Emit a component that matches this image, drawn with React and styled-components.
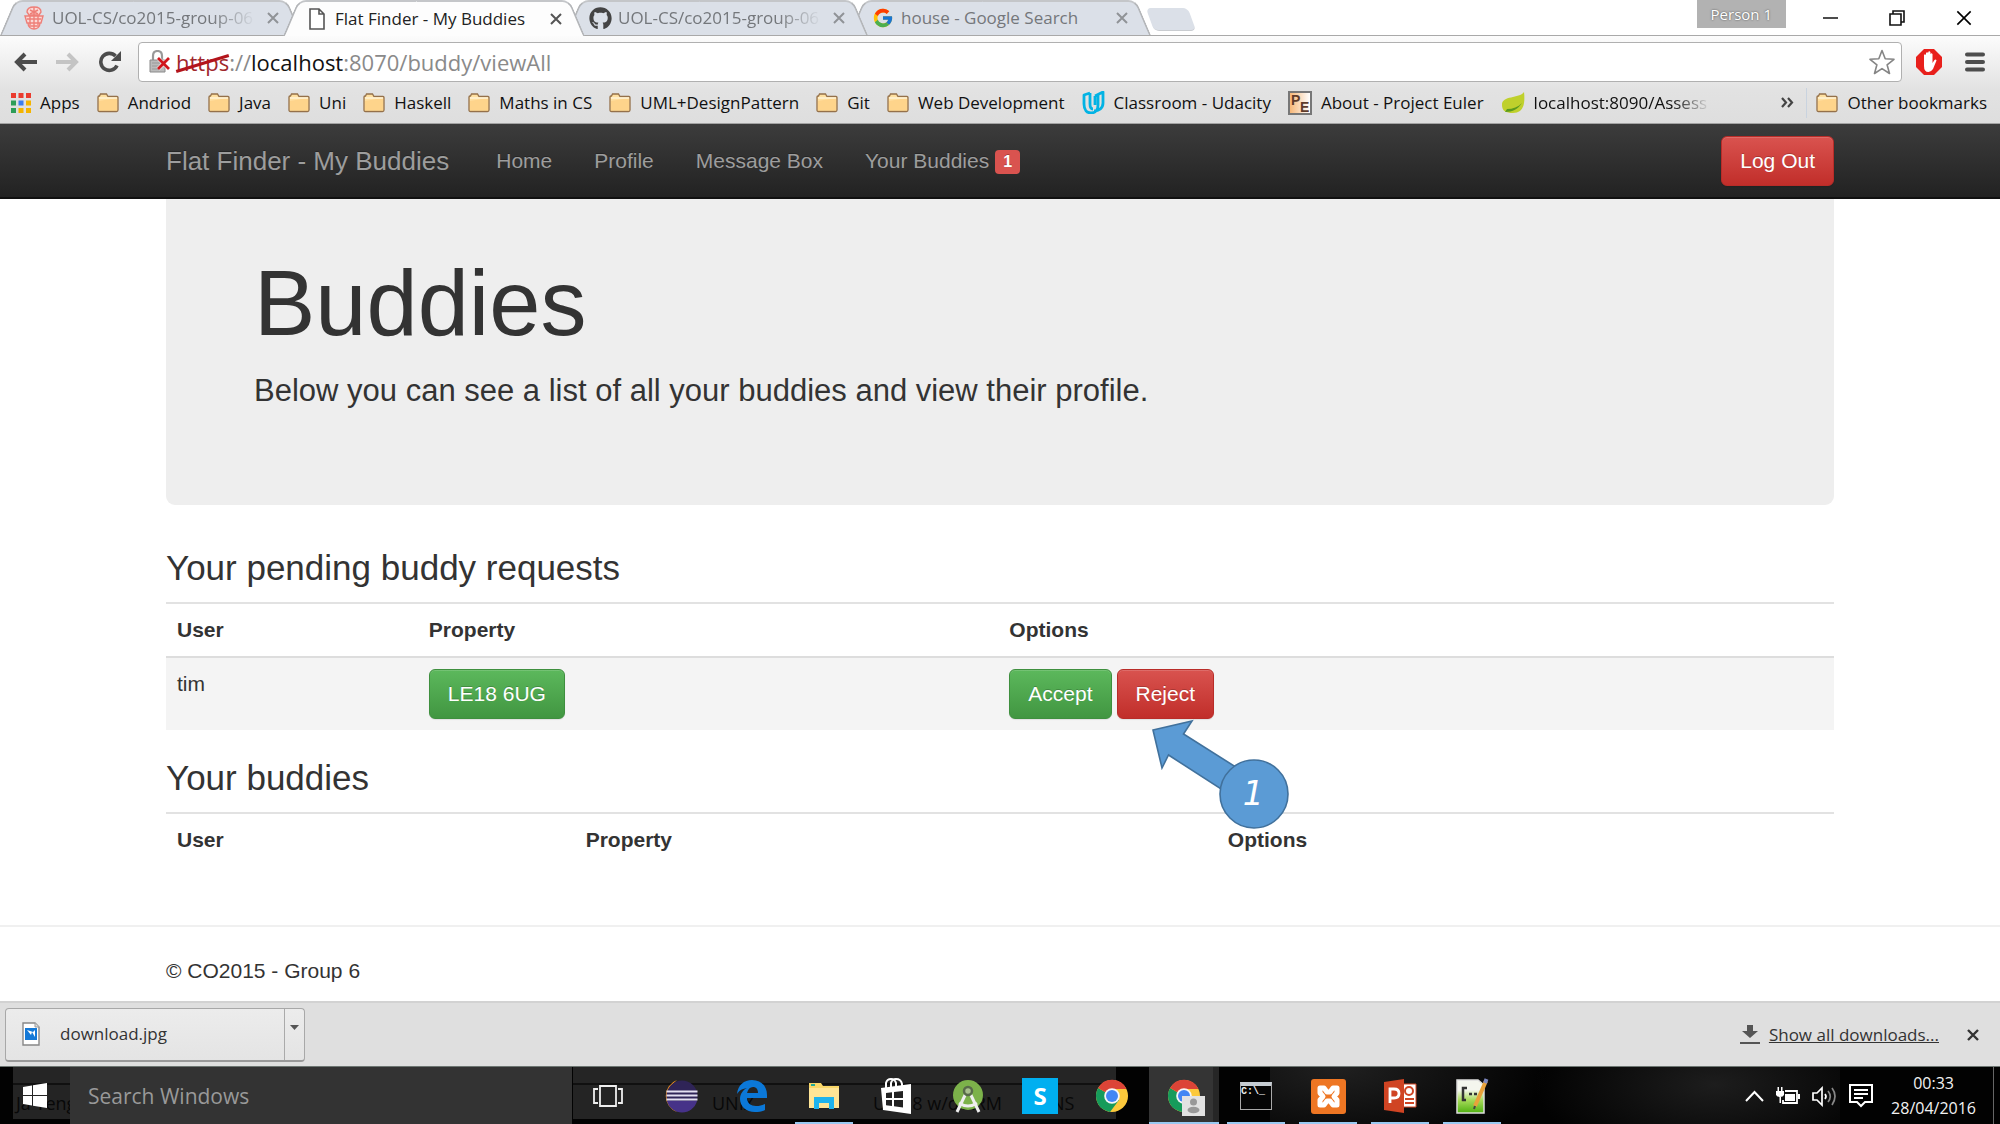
import React from "react";
import styled, { createGlobalStyle, css } from "styled-components";
import { FaGithub } from "react-icons/fa";
import { FcGoogle } from "react-icons/fc";

const uiFont = '"Open Sans", "Noto Sans", sans-serif';
const pageFont = '"Liberation Sans", Arial, sans-serif';

const GlobalStyle = createGlobalStyle`
  *, *::before, *::after { box-sizing: border-box; }
  body { margin: 0; background: #fff; overflow: hidden; }
  button, input { font: inherit; color: inherit; }
  button { border: 0; padding: 0; background: none; cursor: pointer; }
  a { color: inherit; text-decoration: none; }
  svg { display: block; flex: none; }
`;

const Screen = styled.div`
  display: flex;
  flex-direction: column;
  min-height: 100vh;
  background: #fff;
`;

/* ---------- browser frame ---------- */

const TabStrip = styled.div`
  display: flex;
  align-items: flex-start;
  height: 36px;
  border-bottom: 1px solid #a9a9a9;
  font: 17px/22px ${uiFont};
`;

const tabSide = css`
  content: "";
  position: absolute;
  z-index: -1;
  top: 0;
  bottom: 0;
  width: 51%;
  border-top: 2px solid #c4c6c9;
  background: ${(p) => (p.$active ? "#fdfdfd" : "#dbe0e8")};
`;

const Tab = styled.div`
  position: relative;
  z-index: ${(p) => p.$layer};
  isolation: isolate;
  display: flex;
  align-items: center;
  width: 301px;
  height: ${(p) => (p.$active ? 36 : 35)}px;
  margin-right: -18px;
  padding: 4px 17px 3px 22px;
  color: ${(p) => (p.$active ? "#222" : "#74777b")};
  &::before {
    ${tabSide}
    left: 0;
    border-left: 2px solid #b4b6b9;
    border-top-left-radius: 8px;
    transform: skewX(-23deg);
    transform-origin: bottom;
  }
  &::after {
    ${tabSide}
    right: 0;
    border-right: 2px solid #b4b6b9;
    border-top-right-radius: 8px;
    transform: skewX(23deg);
    transform-origin: bottom;
  }
`;

const TabIcon = styled.span`
  display: flex;
  justify-content: center;
  width: 24px;
  margin-right: 6px;
`;

const TabTitle = styled.a`
  flex: 1;
  overflow: hidden;
  white-space: nowrap;
  ${(p) => p.$fade && "mask-image: linear-gradient(90deg, #000 78%, transparent 100%);"}
`;

const TabClose = styled.button`
  display: flex;
  justify-content: center;
  width: 22px;
  margin-left: 6px;
  color: ${(p) => (p.$active ? "#555" : "#909397")};
`;

const NewTab = styled.button`
  width: 42px;
  height: 23px;
  margin: 8px 0 0 18px;
  border-radius: 5px;
  border-bottom: 1px solid #c9ccd0;
  background: #dbe0e8;
  transform: skewX(20deg);
`;

const WindowControls = styled.div`
  display: flex;
  align-items: flex-start;
  margin-left: auto;
  padding-right: 28px;
  gap: 51px;
  svg { margin-top: 10px; }
`;

const Profile = styled.button`
  height: 28px;
  padding: 0 14px;
  margin-right: -14px;
  background: #b2b2b2;
  color: #fff;
  font-size: 15px;
  text-shadow: 0 0 2px #444;
`;

const Toolbars = styled.div`
  background: linear-gradient(#fcfcfc, #e2e2e2 62%, #dedede);
  border-bottom: 1px solid #a3a3a3;
  font-family: ${uiFont};
`;

const AddressRow = styled.div`
  display: flex;
  align-items: center;
  padding: 6px 15px 0 14px;
`;

const ToolButton = styled.button`
  display: flex;
  width: 24px;
  margin-right: 18px;
  color: ${(p) => (p.$dim ? "#c4c4c4" : "#4c4c4c")};
`;

const Omnibox = styled.div`
  flex: 1;
  display: flex;
  align-items: center;
  height: 40px;
  margin-left: -2px;
  padding: 0 6px 0 10px;
  border: 1px solid #b0b0b0;
  border-radius: 4px;
  background: #fff;
  color: #8a8a8a;
  font-size: 22px;
`;

const Scheme = styled.span`
  position: relative;
  color: #a0282c;
  &::after {
    content: "";
    position: absolute;
    left: -1px;
    right: -1px;
    top: 15px;
    height: 3px;
    background: #b3141b;
    transform: rotate(-17deg);
  }
`;

const UrlLabel = styled.label`
  margin-left: 5px;
  white-space: nowrap;
  b { color: #111; font-weight: 400; }
`;

const UrlInput = styled.input`
  flex: 1;
  min-width: 0;
  padding: 0;
  border: 0;
  outline: 0;
  background: none;
`;

const EndTools = styled.div`
  display: flex;
  align-items: center;
  gap: 23px;
  padding-left: 14px;
  color: #4c4c4c;
`;

const BookmarkRow = styled.nav`
  display: flex;
  align-items: center;
  height: 41px;
  padding: 0 13px 0 11px;
  gap: 17px;
  color: #111;
  font-size: 17px;
  line-height: 24px;
`;

const Bookmark = styled.a`
  display: flex;
  align-items: center;
  gap: 9px;
  white-space: nowrap;
  span { ${(p) => p.$fade && "mask-image: linear-gradient(90deg, #000 80%, transparent 102%);"} }
`;

const BookmarkEnd = styled.div`
  display: flex;
  align-items: center;
  gap: 12px;
  margin: 0 -8px 0 auto;
  color: #444;
`;

const Divider = styled.span`
  width: 1px;
  height: 30px;
  background: #c9d3df;
`;

/* ---------- web page ---------- */

const Page = styled.div`
  flex: 1;
  color: #333;
  font: 21px/30px ${pageFont};
`;

const Navbar = styled.header`
  border-bottom: 2px solid #101010;
  background: linear-gradient(#3c3c3c, #222);
`;

const Container = styled.div`
  max-width: 1668px;
  margin: 0 auto;
`;

const NavInner = styled(Container)`
  display: flex;
  align-items: center;
  height: 73px;
  color: #9d9d9d;
  text-shadow: 0 -1px 0 rgba(0, 0, 0, 0.25);
`;

const Brand = styled.a`
  margin-right: 26px;
  font-size: 26px;
`;

const NavLink = styled.a`
  display: flex;
  align-items: center;
  padding: 0 21px;
`;

const Badge = styled.span`
  margin: 3px 0 0 6px;
  padding: 0 8px;
  border-radius: 4px;
  background: #d9534f;
  color: #fff;
  font: bold 16px/24px ${pageFont};
`;

const tones = {
  success: ["#5cb85c", "#419641", "#3e8f3e"],
  danger: ["#d9534f", "#c12e2a", "#b92c28"],
};

const Button = styled.button`
  padding: 9px 18px;
  border: 1px solid ${(p) => tones[p.$tone][2]};
  border-radius: 6px;
  background: linear-gradient(${(p) => tones[p.$tone][0]}, ${(p) => tones[p.$tone][1]});
  box-shadow: inset 0 1px 0 rgba(255, 255, 255, 0.15), 0 1px 1px rgba(0, 0, 0, 0.08);
  color: #fff;
  line-height: 30px;
  white-space: nowrap;
  text-shadow: 0 -1px 0 rgba(0, 0, 0, 0.2);
`;

const LogOut = styled(Button)`
  margin-left: auto;
`;

const Jumbotron = styled.section`
  padding: 54px 88px 93px;
  border-radius: 0 0 9px 9px;
  background: #eee;
  h1 { margin: 0; font-size: 92px; line-height: 101px; font-weight: 400; }
  p { margin: 15px 0 0; font-size: 31px; line-height: 43px; }
`;

const Heading = styled.h3`
  margin: ${(p) => p.$space}px 0 15px;
  font-size: 35px;
  line-height: 38px;
  font-weight: 400;
`;

const Table = styled.table`
  width: 100%;
  table-layout: fixed;
  border-collapse: separate;
  border-spacing: 0;
  border-top: 2px solid #e2e2e2;
  th, td { padding: 11px; text-align: left; vertical-align: top; }
  tbody td { position: relative; border-top: 2px solid #ddd; background: #f4f4f4; }
`;

const Actions = styled.div`
  display: flex;
  gap: 5px;
`;

const Callout = styled.div`
  position: absolute;
  z-index: 2;
  left: 152px;
  top: 60px;
  width: 140px;
  height: 112px;
`;

const CalloutNumber = styled.span`
  position: absolute;
  left: 69px;
  top: 42px;
  width: 68px;
  color: #fff;
  font: italic 33px/68px "DejaVu Sans", sans-serif;
  text-align: center;
`;

const Footer = styled.footer`
  margin-top: 59px;
  padding: 29px 0 15px;
  border-top: 2px solid #f0f0f0;
`;

/* ---------- download shelf ---------- */

const Shelf = styled.div`
  display: flex;
  align-items: center;
  height: 65px;
  padding: 0 21px 0 5px;
  border-top: 2px solid #d2d2d2;
  background: #dfdfdf;
  color: #333;
  font: 17px/24px ${uiFont};
`;

const DownloadItem = styled.div`
  display: flex;
  width: 300px;
  height: 54px;
  border: 1px solid #a8a8a8;
  border-bottom: 2px solid #999;
  border-radius: 4px;
  background: linear-gradient(#ececec, #e4e4e4);
`;

const DownloadFile = styled.button`
  flex: 1;
  display: flex;
  align-items: center;
  gap: 20px;
  padding-left: 16px;
  text-align: left;
`;

const DownloadMenu = styled.button`
  display: flex;
  justify-content: center;
  width: 20px;
  padding-bottom: 14px;
  align-items: center;
  border-left: 1px solid #aaa;
`;

const ShowAll = styled.a`
  display: flex;
  align-items: center;
  gap: 9px;
  margin: 0 28px 0 auto;
  span { text-decoration: underline; }
`;

/* ---------- taskbar ---------- */

const Taskbar = styled.footer`
  position: relative;
  isolation: isolate;
  display: flex;
  height: 59px;
  border-top: 1px solid #6d7672;
  background: #020202;
  color: #f2f2f2;
  font: 16px/25px ${uiFont};
`;

const Reflection = styled.div`
  position: absolute;
  z-index: -1;
  top: 0;
  left: ${(p) => p.$left}px;
  width: ${(p) => p.$width}px;
  height: 52px;
  background: linear-gradient(#252525 16px, #101010 16px, #101010 18px, #242424 18px);
`;

const Sheen = styled.div`
  position: absolute;
  z-index: -1;
  inset: 0 160px 0 1270px;
  background:
    radial-gradient(ellipse 210px 90px at 68px 0, #202020, transparent),
    radial-gradient(ellipse 180px 80px at 78% 30%, #1d1d1d, transparent);
`;

const Ghost = styled.span`
  position: absolute;
  left: ${(p) => p.$x}px;
  top: 24px;
  color: #080808;
  font-size: 18px;
  white-space: pre;
`;

const Start = styled.button`
  width: 70px;
  padding-left: 23px;
`;

const Search = styled.input`
  width: 502px;
  padding: 0 18px;
  border: 0;
  outline: 0;
  background: #333;
  font-size: 21px;
  &::placeholder { color: #999; opacity: 1; }
`;

const Task = styled.button`
  display: flex;
  align-items: center;
  justify-content: center;
  width: 72px;
  ${(p) => p.$running && css`
    background: linear-gradient(#99c9f1, #99c9f1) center bottom / 58px 3px no-repeat;
  `}
  ${(p) => p.$current && css`
    background: linear-gradient(#99c9f1, #99c9f1) center bottom / 70px 3px no-repeat,
      linear-gradient(90deg, #343434 64px, #262626 64px) center / 70px 100% no-repeat;
  `}
`;

const Tray = styled.div`
  display: flex;
  align-items: center;
  gap: 12px;
  margin-left: auto;
  padding-right: 6px;
`;

const Clock = styled.time`
  margin: 0 5px 0 6px;
  text-align: center;
`;

const PeekEdge = styled.span`
  width: 1px;
  height: 100%;
  background: #666;
`;

/* ---------- icons ---------- */

const Cross = ({ size = 12, w = 2 }) => (
  <svg width={size} height={size} viewBox="0 0 12 12" stroke="currentColor" strokeWidth={w}>
    <path d="M1 1L11 11M11 1L1 11" />
  </svg>
);

const Crest = () => (
  <svg width="20" height="24" viewBox="0 0 20 24" fill="none" stroke="#ee7f78" strokeWidth="1.400">
    <path d="M3 6C3 2 7 1 10 1s7 1 7 5l-2 3H5zM1 10h18l-2 7H3zM4 17c0 4 3 6 6 6s6-2 6-6" fill="#fbd9d6" />
    <path d="M10 1v22M6 4l8 4M14 4L6 8M3 13h14M6 10v9M14 10v9M5 20h10" />
  </svg>
);

const Doc = () => (
  <svg width="16" height="22" viewBox="0 0 16 22" fill="#fff" stroke="#555" strokeWidth="1.600">
    <path d="M1 1h9l5 5v15H1zM10 1v5h5" />
  </svg>
);

const Folder = () => (
  <svg width="22" height="20" viewBox="0 0 22 20">
    <path d="M1 17V4q0-1 1-1h.5L3.500 1h6l1.500 2.500H20q1 0 1 1V17q0 1.500-1.500 1.500h-17Q1 18.500 1 17z" fill="#ffe0a0" stroke="#94704a" strokeWidth="1.300" />
    <path d="M2 8L20 5v12.500H2z" fill="#fdcb7d" opacity=".6" />
    <path d="M2 5h18" stroke="#fff3d6" strokeWidth="1.500" />
  </svg>
);

const Apps = () => (
  <svg width="20" height="20" viewBox="0 0 20 20">
    {["#ea3b2e", "#ea3b2e", "#ea3b2e", "#2d9d58", "#3b7ded", "#f4b400", "#2d9d58", "#f4b400", "#f4b400"].map((c, i) => (
      <rect key={i} x={(i % 3) * 7.5} y={Math.floor(i / 3) * 7.5} width="5" height="5" fill={c} />
    ))}
  </svg>
);

const Udacity = () => (
  <svg width="23" height="23" viewBox="0 0 23 23" fill="none" stroke="#02b3e4" strokeWidth="2.800" strokeLinejoin="round">
    <path d="M8 2L2 4v9c0 6 3 9 7 9 5 0 7-4 7-8V4M8 2v11c0 3 1 5 3 5M13 5l8-4v11c0 5-4 8-9 8M13 5v9" />
  </svg>
);

const EulerBox = styled.b`
  position: relative;
  width: 24px;
  height: 24px;
  border: 2px solid #777;
  background: linear-gradient(90deg, #f7b778, #fff);
  color: #5f3b2a;
  font: bold 14px/14px ${pageFont};
  i { position: absolute; left: 1px; top: 0; font-style: normal; }
  i + i { left: 10px; top: 7px; }
`;

const Euler = () => <EulerBox><i>P</i><i>E</i></EulerBox>;

const Leaf = () => (
  <svg width="24" height="23" viewBox="0 0 24 23">
    <path d="M23 1c1 9 1 21-11 21C5 22 1 20 1 14 1 4 18 8 23 1z" fill="#bfd02c" />
    <path d="M4 21c8 0 13-3 17-9-4 4-9 6-15 6z" fill="#5b9a1e" />
  </svg>
);

const Arrow = ({ flip }) => (
  <svg width="23" height="20" viewBox="0 0 23 20" fill="none" stroke="currentColor" strokeWidth="4">
    <path d={flip ? "M0 10h20M12 2l8 8-8 8" : "M23 10H3M11 2L3 10l8 8"} />
  </svg>
);

const Reload = () => (
  <svg width="24" height="22" viewBox="0 0 24 22">
    <path d="M19 14.500A8.500 8.500 0 1 1 17.500 5" fill="none" stroke="currentColor" strokeWidth="3.600" />
    <path d="M23 0v10H13z" fill="currentColor" />
  </svg>
);

const BrokenLock = () => (
  <svg width="22" height="24" viewBox="0 0 22 24">
    <path d="M4 11V6q0-5 4.500-5T13 6v5" fill="none" stroke="#999" strokeWidth="2.200" />
    <path d="M1 10h15v12H1z" fill="#bbb" stroke="#8a8a8a" />
    <path d="M3 13h8M3 16h8M3 19h8" stroke="#999" />
    <path d="M9 8l11 11M20 8L9 19" stroke="#fff" strokeWidth="4" opacity=".7" />
    <path d="M9 8l11 11M20 8L9 19" stroke="#d0161c" strokeWidth="2.800" />
  </svg>
);

const Star = () => (
  <svg width="26" height="26" viewBox="0 0 26 26" fill="#fff" stroke="#858585" strokeWidth="1.600" strokeLinejoin="round">
    <path d="M13 1.500l3.200 8.300 8.800.5-6.900 5.500 2.400 8.700L13 19.600l-7.500 4.900 2.400-8.700L1 10.300l8.800-.5z" />
  </svg>
);

const Stop = () => (
  <svg width="26" height="26" viewBox="0 0 26 26">
    <path d="M8 0h10l8 8v10l-8 8H8l-8-8V8z" fill="#e8201c" />
    <path d="M8 13V6q1-1.600 2 0v5-7q1-1.600 2.200 0v7-8q1.100-1.500 2.200 0v8-6q1-1.500 2.100 0v9l2-3q1.500-1 2 .5L17 20q-2 3-4.500 3Q8 23 8 17z" fill="#fff" />
  </svg>
);

const Menu = () => (
  <svg width="20" height="20" viewBox="0 0 20 20" stroke="#4d4d4d" strokeWidth="4" strokeLinecap="round">
    <path d="M2 2.500h16M2 10h16M2 17.500h16" />
  </svg>
);

const Picture = () => (
  <svg width="18" height="24" viewBox="0 0 18 24">
    <path d="M1 1h12l4 4v18H1z" fill="#fff" stroke="#888" strokeWidth="1.400" />
    <path d="M3 6h12v12H3z" fill="#1479d7" />
    <path d="M5 8l4 5 1-3 3 5V8l-2 2z" fill="#fff" />
    <path d="M13 1v4h4" fill="#ddd" stroke="#999" />
  </svg>
);

const Windows = () => (
  <svg width="24" height="26" viewBox="0 0 24 26" fill="#fff">
    <path d="M0 4l9-1.500V12H0zM10 2.300L24 0v12H10zM0 13h9v9.500L0 21zM10 13h14v12l-14-2.300z" />
  </svg>
);

const TaskView = () => (
  <svg width="30" height="22" viewBox="0 0 30 22" fill="none" stroke="#eee" strokeWidth="1.800">
    <path d="M7 1h16v20H7zM5 4H1v14h4M25 4h4v14h-4" />
  </svg>
);

const Eclipse = () => (
  <svg width="36" height="34" viewBox="0 0 36 34">
    <path d="M15 1A17 17 0 0 0 15 33 20 20 0 0 1 15 1z" fill="#f7941e" />
    <circle cx="20" cy="17" r="15.500" fill="#2f2457" />
    <path d="M5 22h30a15.500 15.500 0 0 1-30 0z" fill="#463288" />
    <path d="M4.500 12.500h31M4.500 16.500h31M4.500 20.500h31" stroke="#e4e0f2" strokeWidth="2" />
  </svg>
);

const Edge = () => (
  <svg width="30" height="32" viewBox="0 0 30 32">
    <path d="M0 14C1 5 7 0 15 0c10 0 15 7 15 15v3H10c0 5 4 8 9 8 4 0 7-1 9-2v6c-3 1.500-6 2-10 2C9 32 3 26 3 19c0-5 3-9 7-11-6 1-8 3-10 6zm10-1h11c0-4-2-6-5-6-3 0-5 2-6 6z" fill="#0b78d8" fillRule="evenodd" />
  </svg>
);

const Explorer = () => (
  <svg width="32" height="28" viewBox="0 0 32 28">
    <path d="M1 1h12l2 3h16v22H1z" fill="#f9d768" />
    <path d="M1 6h30v20H1z" fill="#ffe596" />
    <path d="M3 2h4v2H3z" fill="#2a9" />
    <path d="M6 27V15h20v12h-5v-6H11v6z" fill="#1fb3ec" />
  </svg>
);

const Store = () => (
  <svg width="32" height="36" viewBox="0 0 32 36">
    <path d="M6 10V5q1-4 5-4t5 4v5M11 9V5q1-4 5-4 5 0 6 5v3" fill="none" stroke="#fff" strokeWidth="2" />
    <path d="M1 10L31 6v30L3 32z" fill="#fff" />
    <path d="M6 15l6-.7V20H6zM14 14l9-1v7h-9zM6 22h6v6l-6-.7zM14 22h9v7.500l-9-1.200z" fill="#222" />
  </svg>
);

const Studio = () => (
  <svg width="32" height="34" viewBox="0 0 32 34">
    <circle cx="16" cy="16" r="15" fill="#7cb24a" />
    <path d="M16 10L5 33M16 10l11 23M7 24q9 6 18 0" fill="none" stroke="#eee" strokeWidth="3" />
    <circle cx="16" cy="12" r="4" fill="#a9c08d" stroke="#586b4a" strokeWidth="2.500" />
  </svg>
);

const SkypeTile = styled.span`
  width: 36px;
  height: 36px;
  background: #00aff0;
  color: #fff;
  font: bold 24px/36px ${uiFont};
`;

const ChromeMark = ({ person }) => (
  <svg width="34" height="38" viewBox="0 0 34 38" overflow="visible">
    <circle cx="17" cy="19" r="16" fill="#fcc93c" />
    <path d="M17 19L3.100 11A16 16 0 0 0 15 34.900L24 23z" fill="#169b5b" />
    <path d="M17 19L3.100 11A16 16 0 0 1 31.500 12H17z" fill="#dc4437" />
    <circle cx="17" cy="19" r="7.800" fill="#f6f6f6" />
    <circle cx="17" cy="19" r="6" fill="#4286f4" />
    {person && (
      <g>
        <path d="M15 19h23v20H15z" fill="#e2e2e2" />
        <circle cx="26.500" cy="25" r="3.500" fill="#999" />
        <ellipse cx="26.500" cy="33" rx="6" ry="3.200" fill="#999" />
      </g>
    )}
  </svg>
);

const PromptBox = styled.span`
  width: 32px;
  height: 28px;
  border: 1px solid #a9a9a9;
  border-top: 4px solid #c6ccd2;
  background: #050505;
  color: #eee;
  font: bold 10px/12px "Liberation Mono", monospace;
  text-align: left;
`;

const Xampp = () => (
  <svg width="35" height="35" viewBox="0 0 35 35">
    <rect width="35" height="35" rx="3" fill="#ee7623" />
    <path d="M9 9h4l3 4h3l3-4h4v5l-3 3.500 3 3.500v5h-4l-3-4h-3l-3 4H9v-5l3-3.500L9 14z" fill="#ee7623" stroke="#fff" strokeWidth="5" strokeLinejoin="round" />
  </svg>
);

const PowerPoint = () => (
  <svg width="33" height="34" viewBox="0 0 33 34">
    <path d="M18 5h14v23H18z" fill="#fff" stroke="#d04423" />
    <path d="M0 3l20-3v34L0 31z" fill="#d04423" />
    <path d="M6 24V10h4q5 0 5 4.500T10 19H6" fill="none" stroke="#fff" strokeWidth="2.800" />
    <path d="M21 20h9M21 24h9" stroke="#d04423" strokeWidth="2" />
    <circle cx="25" cy="12" r="4" fill="none" stroke="#d04423" strokeWidth="2" />
  </svg>
);

const Notepad = () => (
  <svg width="34" height="36" viewBox="0 0 34 36">
    <defs>
      <linearGradient id="page" x1="0" y1="0" x2="0" y2="1">
        <stop offset=".3" stopColor="#f4f6ee" />
        <stop offset=".6" stopColor="#a9dc5c" />
        <stop offset="1" stopColor="#4fb010" />
      </linearGradient>
    </defs>
    <path d="M2 2h21l6 5v28H2z" fill="url(#page)" stroke="#ddd" strokeWidth="1.500" />
    <path d="M12 10H8v12h3M14 16h3M19 16h3" fill="none" stroke="#333" strokeWidth="2.500" />
    <path d="M20 28L31 3" stroke="#e9a23b" strokeWidth="4" />
    <path d="M30 5l1.500-4" stroke="#7d88c0" strokeWidth="4" />
    <path d="M20 28l-1 3" stroke="#444" strokeWidth="2" />
  </svg>
);

const Chevron = () => (
  <svg width="19" height="12" viewBox="0 0 19 12" fill="none" stroke="#fff" strokeWidth="2">
    <path d="M1 11l8.500-9L18 11" />
  </svg>
);

const Battery = () => (
  <svg width="24" height="18" viewBox="0 0 24 18">
    <path d="M9 4h12v12H7v-3" fill="none" stroke="#fff" strokeWidth="1.800" />
    <path d="M9 7h10v7H9zM22 7h2v5h-2z" fill="#fff" />
    <path d="M0 4h8v4q-1 2-4 2T0 8zM1.500 0h1.500v4H1.500zM5 0h1.500v4H5zM3.500 9H5v7H3.500z" fill="#fff" />
  </svg>
);

const Volume = () => (
  <svg width="25" height="21" viewBox="0 0 25 21" fill="none" stroke="#fff" strokeWidth="1.700">
    <path d="M1 7h4l5-5v17l-5-5H1z" />
    <path d="M13 8q2 2.500 0 5" />
    <path d="M16 5q4.500 5.500 0 11M20 2q6 8 0 17" stroke="#888" />
  </svg>
);

const ActionCenter = () => (
  <svg width="24" height="24" viewBox="0 0 24 24" fill="none" stroke="#fff" strokeWidth="2">
    <path d="M1 1h22v17h-7l-4 4-4-4H1zM5 6h14M5 10h14M5 14h9" />
  </svg>
);

const CalloutArrow = () => (
  <svg width="140" height="112" viewBox="0 0 140 112" fill="#5b9bd5" stroke="#41719c" strokeWidth="1.600">
    <path d="M3 12l39-9-8.500 13L100 58 85 80 18.500 37 12 50z" />
    <circle cx="104" cy="76" r="34" />
  </svg>
);

/* ---------- data ---------- */

const tabs = [
  { title: "UOL-CS/co2015-group-06", icon: <Crest />, fade: true },
  { title: "Flat Finder - My Buddies", icon: <Doc />, active: true },
  { title: "UOL-CS/co2015-group-06", icon: <FaGithub size={23} color="#444" />, fade: true },
  { title: "house - Google Search", icon: <FcGoogle size={22} /> },
];

const bookmarks = [
  ["Apps", <Apps />],
  ["Andriod"], ["Java"], ["Uni"], ["Haskell"], ["Maths in CS"],
  ["UML+DesignPattern"], ["Git"], ["Web Development"],
  ["Classroom - Udacity", <Udacity />],
  ["About - Project Euler", <Euler />],
  ["localhost:8090/Assess", <Leaf />, true],
];

const tasks = [
  ["Task View", <TaskView />],
  ["Eclipse", <Eclipse />],
  ["Edge", <Edge />],
  ["File Explorer", <Explorer />, "running"],
  ["Store", <Store />],
  ["Android Studio", <Studio />],
  ["Skype", <SkypeTile>S</SkypeTile>],
  ["Chrome", <ChromeMark />],
  ["Chrome, Person 1", <ChromeMark person />, "current"],
  ["Command Prompt", <PromptBox>C:\_</PromptBox>, "running"],
  ["XAMPP", <Xampp />, "running"],
  ["PowerPoint", <PowerPoint />, "running"],
  ["Notepad++", <Notepad />, "running"],
];

function Columns({ widths }) {
  return (
    <>
      <colgroup>
        {widths.map((w, i) => <col key={i} width={w} />)}
      </colgroup>
      <thead>
        <tr>
          <th scope="col">User</th>
          <th scope="col">Property</th>
          <th scope="col">Options</th>
        </tr>
      </thead>
    </>
  );
}

export default function App() {
  return (
    <Screen>
      <GlobalStyle />
      <TabStrip>
        {tabs.map((t, i) => (
          <Tab key={i} $active={t.active} $layer={t.active ? 9 : 5 - i}>
            <TabIcon>{t.icon}</TabIcon>
            <TabTitle href="#" $fade={t.fade}>{t.title}</TabTitle>
            <TabClose $active={t.active} aria-label="Close tab"><Cross /></TabClose>
          </Tab>
        ))}
        <NewTab aria-label="New tab" />
        <WindowControls>
          <Profile>Person 1</Profile>
          <button aria-label="Minimize">
            <svg width="15" height="16" stroke="#111" strokeWidth="1.500"><path d="M0 8h15" /></svg>
          </button>
          <button aria-label="Restore">
            <svg width="16" height="16" fill="none" stroke="#111" strokeWidth="1.600"><path d="M1 4h11v11H1zM4 4V1h11v11h-3" /></svg>
          </button>
          <button aria-label="Close window"><Cross size={16} w={1.2} /></button>
        </WindowControls>
      </TabStrip>

      <Toolbars>
        <AddressRow>
          <ToolButton aria-label="Back"><Arrow /></ToolButton>
          <ToolButton aria-label="Forward" $dim><Arrow flip /></ToolButton>
          <ToolButton aria-label="Reload"><Reload /></ToolButton>
          <Omnibox>
            <BrokenLock />
            <UrlLabel htmlFor="url"><Scheme>https</Scheme>://<b>localhost</b></UrlLabel>
            <UrlInput id="url" defaultValue=":8070/buddy/viewAll" />
            <button aria-label="Bookmark this page"><Star /></button>
          </Omnibox>
          <EndTools>
            <button aria-label="Ad blocker"><Stop /></button>
            <button aria-label="Menu"><Menu /></button>
          </EndTools>
        </AddressRow>
        <BookmarkRow>
          {bookmarks.map(([name, icon, fade]) => (
            <Bookmark key={name} href="#" $fade={fade}>
              {icon || <Folder />}
              <span>{name}</span>
            </Bookmark>
          ))}
          <BookmarkEnd>
            <button aria-label="More bookmarks">
              <svg width="13" height="11" fill="none" stroke="#444" strokeWidth="2.200"><path d="M1 1l4 4.500L1 10M7 1l4 4.500L7 10" /></svg>
            </button>
            <Divider />
          </BookmarkEnd>
          <Bookmark href="#"><Folder /><span>Other bookmarks</span></Bookmark>
        </BookmarkRow>
      </Toolbars>

      <Page>
        <Navbar>
          <NavInner>
            <Brand href="#">Flat Finder - My Buddies</Brand>
            <NavLink href="#">Home</NavLink>
            <NavLink href="#">Profile</NavLink>
            <NavLink href="#">Message Box</NavLink>
            <NavLink href="#">Your Buddies<Badge>1</Badge></NavLink>
            <LogOut $tone="danger">Log Out</LogOut>
          </NavInner>
        </Navbar>
        <Container as="main">
          <Jumbotron>
            <h1>Buddies</h1>
            <p>Below you can see a list of all your buddies and view their profile.</p>
          </Jumbotron>
          <Heading $space={44}>Your pending buddy requests</Heading>
          <Table>
            <Columns widths={["15.1%", "34.8%", "50.1%"]} />
            <tbody>
              <tr>
                <td>tim</td>
                <td><Actions><Button $tone="success">LE18 6UG</Button></Actions></td>
                <td>
                  <Actions>
                    <Button $tone="success">Accept</Button>
                    <Button $tone="danger">Reject</Button>
                  </Actions>
                  <Callout>
                    <CalloutArrow />
                    <CalloutNumber>1</CalloutNumber>
                  </Callout>
                </td>
              </tr>
            </tbody>
          </Table>
          <Heading $space={29}>Your buddies</Heading>
          <Table>
            <Columns widths={["24.5%", "38.5%", "37%"]} />
          </Table>
        </Container>
        <Footer>
          <Container>© CO2015 - Group 6</Container>
        </Footer>
      </Page>

      <Shelf>
        <DownloadItem>
          <DownloadFile><Picture />download.jpg</DownloadFile>
          <DownloadMenu aria-label="Download options">
            <svg width="9" height="5" fill="#555"><path d="M0 0h9L4.500 5z" /></svg>
          </DownloadMenu>
        </DownloadItem>
        <ShowAll href="#">
          <svg width="20" height="20" fill="#555"><path d="M7 0h6v6h5l-8 7-8-7h5zM0 17h20v2H0z" /></svg>
          <span>Show all downloads...</span>
        </ShowAll>
        <button aria-label="Close downloads bar"><Cross size={12} w={2.4} /></button>
      </Shelf>

      <Taskbar>
        <Reflection $left={13} $width={57}><Ghost $x={3}>Ja Teng</Ghost></Reflection>
        <Reflection $left={573} $width={543}>
          <Ghost $x={139}>UNIX</Ghost>
          <Ghost $x={300}>USB 8 w/o ARM</Ghost>
          <Ghost $x={478}>NS</Ghost>
        </Reflection>
        <Sheen />
        <Start aria-label="Start"><Windows /></Start>
        <Search aria-label="Search Windows" placeholder="Search Windows" />
        {tasks.map(([name, icon, state]) => (
          <Task key={name} aria-label={name} $running={state === "running"} $current={state === "current"}>
            {icon}
          </Task>
        ))}
        <Tray>
          <Chevron />
          <Battery />
          <Volume />
          <ActionCenter />
          <Clock>00:33<br />28/04/2016</Clock>
          <PeekEdge />
        </Tray>
      </Taskbar>
    </Screen>
  );
}
